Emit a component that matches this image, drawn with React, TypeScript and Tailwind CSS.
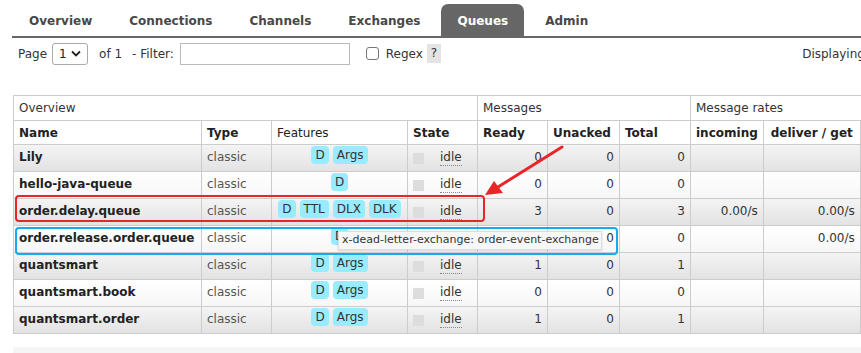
import type { ReactNode } from "react";

type Row = {
  name: string;
  features: string[];
  ready: string;
  unacked: string;
  total: string;
  incoming: string;
  deliver: string;
};

const ROWS: Row[] = [
  { name: "Lily", features: ["D", "Args"], ready: "0", unacked: "0", total: "0", incoming: "", deliver: "" },
  { name: "hello-java-queue", features: ["D"], ready: "0", unacked: "0", total: "0", incoming: "", deliver: "" },
  { name: "order.delay.queue", features: ["D", "TTL", "DLX", "DLK"], ready: "3", unacked: "0", total: "3", incoming: "0.00/s", deliver: "0.00/s" },
  { name: "order.release.order.queue", features: ["D"], ready: "0", unacked: "0", total: "0", incoming: "", deliver: "0.00/s" },
  { name: "quantsmart", features: ["D", "Args"], ready: "1", unacked: "0", total: "1", incoming: "", deliver: "" },
  { name: "quantsmart.book", features: ["D", "Args"], ready: "0", unacked: "0", total: "0", incoming: "", deliver: "" },
  { name: "quantsmart.order", features: ["D", "Args"], ready: "1", unacked: "0", total: "1", incoming: "", deliver: "" },
];

const TABS = ["Overview", "Connections", "Channels", "Exchanges", "Queues", "Admin"];

function Badge({ children }: { children: ReactNode }) {
  return (
    <span className="mx-[2px] inline-block rounded-[4px] bg-[#99ebff] px-[4px] leading-[18px] text-[#333]">
      {children}
    </span>
  );
}

function Cell({ children, className = "" }: { children?: ReactNode; className?: string }) {
  return <td className={`border border-[#ccc] px-[5px] pt-[3px] align-top ${className}`}>{children}</td>;
}

export default function App() {
  return (
    <div
      className="relative h-[353px] w-[861px] overflow-hidden bg-white text-[12px] text-[#484848]"
      style={{ fontFamily: '"DejaVu Sans", Verdana, sans-serif' }}
    >
      <div className="w-[1100px]">
        {/* tabs */}
        <ul className="ml-[12px] flex h-[38px] items-end gap-[5px] border-b-2 border-[#666] pl-[1px] pt-[4px]">
          {TABS.map((tab) => (
            <li
              key={tab}
              className={`flex h-[32px] items-center rounded-t-[7px] px-4 pt-[1px] text-[12px] font-bold ${
                tab === "Queues" ? "bg-[#666] text-white" : "text-[#484848]"
              }`}
            >
              {tab}
            </li>
          ))}
        </ul>

        {/* paging row */}
        <div className="flex h-[29px] w-[1021px] items-center pl-[18px] pt-[2px]">
          <span className="text-[#333]">Page</span>
          <span className="ml-[5px] flex h-[22px] w-[36px] items-center justify-between rounded-[3px] border border-[#aaa] bg-white px-[6px] text-[#222]">
            1
            <svg width="10" height="7" viewBox="0 0 10 7">
              <path d="M1 1.5 L5 5.5 L9 1.5" fill="none" stroke="#222" strokeWidth="1.8" />
            </svg>
          </span>
          <span className="ml-[11px] text-[#333]">of 1</span>
          <span className="ml-[10px] text-[#333]">- Filter:</span>
          <span className="ml-[6px] h-[22px] w-[170px] border border-[#bbb] bg-white" />
          <span className="ml-[16px] h-[13px] w-[13px] rounded-[3px] border border-[#777] bg-white" />
          <span className="ml-[7px] text-[#333]">Regex</span>
          <span className="ml-[4px] bg-[#e4e4e4] px-[4px] leading-[19px] text-[#333]">?</span>
          <span className="ml-auto text-[#333]">Displaying 7 items , page size up to:</span>
        </div>

        {/* table */}
        <table className="ml-[13px] mt-[28px] table-fixed border-collapse">
          <colgroup>
            <col className="w-[188px]" />
            <col className="w-[70px]" />
            <col className="w-[136px]" />
            <col className="w-[70px]" />
            <col className="w-[70px]" />
            <col className="w-[72px]" />
            <col className="w-[71px]" />
            <col className="w-[72px]" />
            <col className="w-[97px]" />
            <col className="w-[80px]" />
          </colgroup>
          <thead>
            <tr className="h-[25px] bg-white text-[#333]">
              <th colSpan={4} className="border border-[#ccc] px-[5px] text-left font-normal">
                Overview
              </th>
              <th colSpan={3} className="border border-[#ccc] px-[5px] text-left font-normal">
                Messages
              </th>
              <th colSpan={3} className="border border-[#ccc] px-[5px] text-left font-normal">
                Message rates
              </th>
            </tr>
            <tr className="h-[24px] bg-white text-left text-[#222]">
              <th className="border border-[#ccc] px-[5px]">Name</th>
              <th className="border border-[#ccc] px-[5px]">Type</th>
              <th className="border border-[#ccc] px-[5px] font-normal">Features</th>
              <th className="border border-[#ccc] px-[5px]">State</th>
              <th className="border border-[#ccc] px-[5px]">Ready</th>
              <th className="border border-[#ccc] px-[5px]">Unacked</th>
              <th className="border border-[#ccc] px-[5px]">Total</th>
              <th className="border border-[#ccc] px-[5px] text-center">incoming</th>
              <th className="border border-[#ccc] px-[5px] text-center">deliver / get</th>
              <th className="border border-[#ccc] px-[5px] text-center">ack</th>
            </tr>
          </thead>
          <tbody>
            {ROWS.map((row, i) => (
              <tr
                key={row.name}
                className={`h-[27px] ${
                  i % 2 === 0
                    ? "bg-gradient-to-b from-[#f4f4f4] to-[#e2e2e2]"
                    : "bg-gradient-to-b from-white to-[#f6f6f6]"
                }`}
              >
                <Cell className="font-bold text-[#222]">{row.name}</Cell>
                <Cell className="text-[#555]">classic</Cell>
                <td className="border border-[#ccc] px-[3px] pt-[1px] text-center align-top">
                  {row.features.map((f) => (
                    <Badge key={f}>{f}</Badge>
                  ))}
                </td>
                <Cell className="pt-[5px]">
                  <span className="flex items-center">
                    <span className="h-[11px] w-[11px] bg-[#ddd]" />
                    <span className="ml-[16px] border-b border-dotted border-[#888] leading-[15px] text-[#333]">
                      idle
                    </span>
                  </span>
                </Cell>
                <Cell className="text-right text-[#333]">{row.ready}</Cell>
                <Cell className="text-right text-[#333]">{row.unacked}</Cell>
                <Cell className="text-right text-[#333]">{row.total}</Cell>
                <Cell className="text-right text-[#333]">{row.incoming}</Cell>
                <Cell className="text-right text-[#333]">{row.deliver}</Cell>
                <Cell />
              </tr>
            ))}
          </tbody>
        </table>

        <div className="ml-[13px] mt-[13px] h-[10px] bg-[#f5f5f5]" />
      </div>

      {/* tooltip */}
      <div className="absolute left-[338px] top-[231px] flex h-[19px] w-[264px] items-center border border-[#ddd] bg-[#f7f7f7] pl-[3px] text-[11px] text-[#333] shadow-[0_1px_2px_rgba(0,0,0,0.15)]">
        x-dead-letter-exchange: order-event-exchange
      </div>

      {/* annotations */}
      <div className="pointer-events-none absolute left-[15px] top-[195px] h-[27px] w-[470px] rounded-[4px] border-2 border-[#e8262a]" />
      <div className="pointer-events-none absolute left-[15px] top-[227px] h-[28px] w-[603px] rounded-[4px] border-2 border-[#19a9ee]" />
      <svg className="pointer-events-none absolute left-0 top-0" width="861" height="353">
        <line x1="562" y1="147" x2="498" y2="187" stroke="#e8262a" strokeWidth="3" strokeLinecap="round" />
        <polygon points="485,195 494,181 503,193" fill="#e8262a" />
      </svg>
    </div>
  );
}
